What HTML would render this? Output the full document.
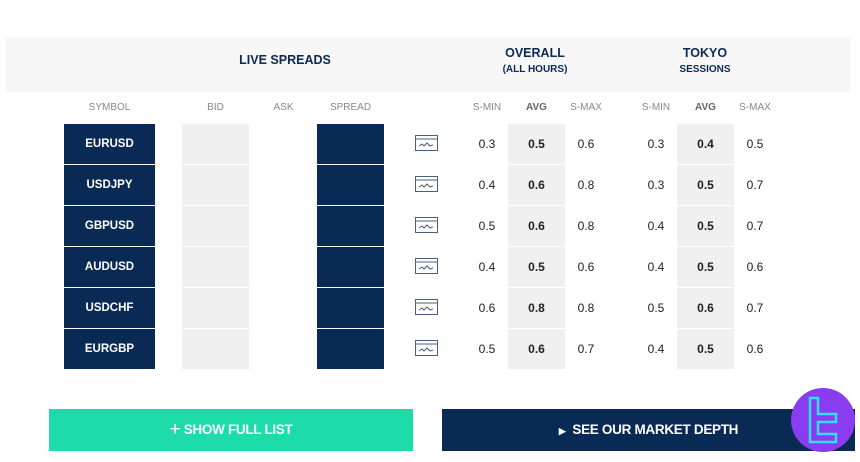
<!DOCTYPE html><html><head><style>
body{margin:0;width:860px;height:462px;background:#fff;font-family:"Liberation Sans",Verdana,sans-serif;position:relative;overflow:hidden}
.a{position:absolute}
.hd{left:6px;top:37px;width:844px;height:55px;background:#f7f7f7}
.t{color:#0a2a56;font-weight:bold;text-align:center}
.ch{top:102px;font-size:10px;color:#888;text-align:center}
.cell{font-size:11.5px;text-align:center;line-height:40px;height:40px}
.nav{background:#0a2a56;color:#fff;font-weight:bold}
.gr{background:#f0f0f0}
.v{font-size:12px;color:#222;text-align:center;line-height:40px;height:40px}
</style></head><body>
<div class="a hd"></div>
<div class="a t" style="left:200px;width:170px;top:53px;font-size:12.5px">LIVE SPREADS</div>
<div class="a t" style="left:470px;width:130px;top:46px;font-size:12.5px">OVERALL</div>
<div class="a t" style="left:470px;width:130px;top:64px;font-size:10px">(ALL HOURS)</div>
<div class="a t" style="left:640px;width:130px;top:46px;font-size:12.5px">TOKYO</div>
<div class="a t" style="left:640px;width:130px;top:64px;font-size:10px">SESSIONS</div>
<div class="a ch" style="left:64px;width:91px">SYMBOL</div>
<div class="a ch" style="left:182px;width:67px">BID</div>
<div class="a ch" style="left:260px;width:47px">ASK</div>
<div class="a ch" style="left:317px;width:67px">SPREAD</div>
<div class="a ch" style="left:462px;width:50px">S-MIN</div>
<div class="a ch" style="left:508px;width:57px;font-weight:bold;color:#666">AVG</div>
<div class="a ch" style="left:561px;width:50px">S-MAX</div>
<div class="a ch" style="left:631px;width:50px">S-MIN</div>
<div class="a ch" style="left:677px;width:57px;font-weight:bold;color:#666">AVG</div>
<div class="a ch" style="left:730px;width:50px">S-MAX</div>
<div id="rows"></div>
<script>
var d=[["EURUSD",.3,.5,.6,.3,.4,.5],["USDJPY",.4,.6,.8,.3,.5,.7],["GBPUSD",.5,.6,.8,.4,.5,.7],["AUDUSD",.4,.5,.6,.4,.5,.6],["USDCHF",.6,.8,.8,.5,.6,.7],["EURGBP",.5,.6,.7,.4,.5,.6]];
var h="";d.forEach(function(r,i){var y=124+i*41;var f=function(n){return n.toFixed(1)};
h+='<div class="a cell nav" style="left:64px;width:91px;top:'+y+'px">'+r[0]+'</div>';
h+='<div class="a cell gr" style="left:182px;width:67px;top:'+y+'px"></div>';
h+='<div class="a cell nav" style="left:317px;width:67px;top:'+y+'px"></div>';
h+='<svg class="a" style="left:415px;top:'+(y+11)+'px" width="23" height="17" viewBox="0 0 23 17"><rect x="0.5" y="0.5" width="22" height="15" fill="none" stroke="#4a5f80"/><line x1="0.5" y1="4" x2="22.5" y2="4" stroke="#4a5f80"/><polyline points="4,11 7,9 9,11 12,8 15,11 18,10" fill="none" stroke="#4a5f80"/></svg>';
h+='<div class="a v" style="left:462px;width:50px;top:'+y+'px">'+f(r[1])+'</div>';
h+='<div class="a v gr" style="left:508px;width:57px;top:'+y+'px;font-weight:bold">'+f(r[2])+'</div>';
h+='<div class="a v" style="left:561px;width:50px;top:'+y+'px">'+f(r[3])+'</div>';
h+='<div class="a v" style="left:631px;width:50px;top:'+y+'px">'+f(r[4])+'</div>';
h+='<div class="a v gr" style="left:677px;width:57px;top:'+y+'px;font-weight:bold">'+f(r[5])+'</div>';
h+='<div class="a v" style="left:730px;width:50px;top:'+y+'px">'+f(r[6])+'</div>';
});document.getElementById("rows").innerHTML=h;
</script>
<div class="a" style="left:49px;top:409px;width:364px;height:42px;background:#1ddcaa;color:#fff;font-weight:bold;font-size:13.5px;text-align:center;line-height:42px;letter-spacing:-0.3px"><span style="font-weight:normal;font-size:19px;vertical-align:-1px">+</span> SHOW FULL LIST</div>
<div class="a" style="left:442px;top:409px;width:413px;height:42px;background:#0a2a56;color:#fff;font-weight:bold;font-size:13.5px;text-align:center;line-height:42px;letter-spacing:-0.3px"><span style="font-size:9px">&#9654;</span>&nbsp; SEE OUR MARKET DEPTH</div>
<svg class="a" style="left:790px;top:387px" width="66" height="66" viewBox="0 0 66 66"><circle cx="33" cy="33" r="32" fill="#8a3cf0"/><path d="M20 11h8v16h18v8h-18v12h18v8h-26z" fill="none" stroke="#2fe0ff" stroke-width="2.5"/></svg>
</body></html>
